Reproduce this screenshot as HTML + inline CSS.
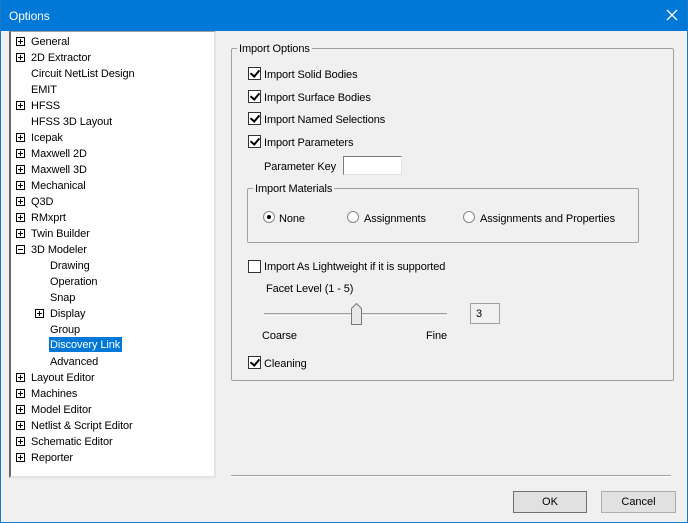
<!DOCTYPE html>
<html><head><style>
*{margin:0;padding:0;box-sizing:border-box}
body{width:688px;height:523px;background:#f0f0f0;font-family:"Liberation Sans",sans-serif;font-size:11px;color:#000;position:relative;overflow:hidden}
.abs{position:absolute;white-space:nowrap}
span.abs{padding-top:1px;letter-spacing:-0.1px}
#win{position:absolute;left:0;top:0;width:688px;height:523px;border:1px solid #1979ca;border-top:none}
#title{position:absolute;left:0;top:0;width:688px;height:31px;background:#0078d7;color:#fff;font-size:12px}
#tree{position:absolute;left:9px;top:31px;width:207px;height:447px;background:#fff;border-top:1px solid #a0a0a0;border-left:2px solid #696969;border-right:2px solid #e3e3e3;border-bottom:2px solid #e3e3e3}
.pl{position:absolute;width:9px;height:9px;border:1px solid #000;background:#fff}
.pl:before{content:"";position:absolute;left:1px;top:3px;width:5px;height:1px;background:#000}
.pl.p:after{content:"";position:absolute;left:3px;top:1px;width:1px;height:5px;background:#000}
.cb{position:absolute;width:13px;height:13px;border:1px solid #333;background:#fff}
.cb.c:after{content:"";position:absolute;left:3px;top:0px;width:4px;height:7px;border-right:2px solid #000;border-bottom:2px solid #000;transform:rotate(40deg)}
.rb{position:absolute;width:12px;height:12px;border-radius:50%;border:1px solid #888;background:#fff}
.rb.c:after{content:"";position:absolute;left:3px;top:3px;width:4px;height:4px;border-radius:50%;background:#000}
.grp{position:absolute;border:1px solid #a0a0a0;border-radius:2px}
.lg{position:absolute;background:#f0f0f0;padding:0 2px}
.btn{position:absolute;background:#e1e1e1;border:1px solid #adadad;text-align:center;line-height:20px}
</style></head><body>
<div id="title"><span class="abs" style="left:9px;top:8px">Options</span>
<svg class="abs" style="left:666px;top:9px" width="12" height="12"><path d="M1 1L11 11M11 1L1 11" stroke="#fff" stroke-width="1.3"/></svg></div>
<div id="win"></div>
<div id="tree">
<div class="pl p" style="left:5px;top:5px"></div><span class="abs" style="left:20px;top:3px">General</span>
<div class="pl p" style="left:5px;top:21px"></div><span class="abs" style="left:20px;top:19px">2D Extractor</span>
<span class="abs" style="left:20px;top:35px">Circuit NetList Design</span>
<span class="abs" style="left:20px;top:51px">EMIT</span>
<div class="pl p" style="left:5px;top:69px"></div><span class="abs" style="left:20px;top:67px">HFSS</span>
<span class="abs" style="left:20px;top:83px">HFSS 3D Layout</span>
<div class="pl p" style="left:5px;top:101px"></div><span class="abs" style="left:20px;top:99px">Icepak</span>
<div class="pl p" style="left:5px;top:117px"></div><span class="abs" style="left:20px;top:115px">Maxwell 2D</span>
<div class="pl p" style="left:5px;top:133px"></div><span class="abs" style="left:20px;top:131px">Maxwell 3D</span>
<div class="pl p" style="left:5px;top:149px"></div><span class="abs" style="left:20px;top:147px">Mechanical</span>
<div class="pl p" style="left:5px;top:165px"></div><span class="abs" style="left:20px;top:163px">Q3D</span>
<div class="pl p" style="left:5px;top:181px"></div><span class="abs" style="left:20px;top:179px">RMxprt</span>
<div class="pl p" style="left:5px;top:197px"></div><span class="abs" style="left:20px;top:195px">Twin Builder</span>
<div class="pl" style="left:5px;top:213px"></div><span class="abs" style="left:20px;top:211px">3D Modeler</span>
<span class="abs" style="left:39px;top:227px">Drawing</span>
<span class="abs" style="left:39px;top:243px">Operation</span>
<span class="abs" style="left:39px;top:259px">Snap</span>
<div class="pl p" style="left:24px;top:277px"></div><span class="abs" style="left:39px;top:275px">Display</span>
<span class="abs" style="left:39px;top:291px">Group</span>
<span class="abs" style="left:38px;top:305px;background:#0078d7;color:#fff;padding:2px 2px 1px 1px">Discovery Link</span>
<span class="abs" style="left:39px;top:323px">Advanced</span>
<div class="pl p" style="left:5px;top:341px"></div><span class="abs" style="left:20px;top:339px">Layout Editor</span>
<div class="pl p" style="left:5px;top:357px"></div><span class="abs" style="left:20px;top:355px">Machines</span>
<div class="pl p" style="left:5px;top:373px"></div><span class="abs" style="left:20px;top:371px">Model Editor</span>
<div class="pl p" style="left:5px;top:389px"></div><span class="abs" style="left:20px;top:387px">Netlist &amp; Script Editor</span>
<div class="pl p" style="left:5px;top:405px"></div><span class="abs" style="left:20px;top:403px">Schematic Editor</span>
<div class="pl p" style="left:5px;top:421px"></div><span class="abs" style="left:20px;top:419px">Reporter</span>
</div>

<div class="grp" style="left:231px;top:48px;width:443px;height:333px"></div>
<span class="lg abs" style="left:237px;top:42px">Import Options</span>
<div class="cb c" style="left:248px;top:67px"></div><span class="abs" style="left:264px;top:68px">Import Solid Bodies</span>
<div class="cb c" style="left:248px;top:90px"></div><span class="abs" style="left:264px;top:91px">Import Surface Bodies</span>
<div class="cb c" style="left:248px;top:112px"></div><span class="abs" style="left:264px;top:113px">Import Named Selections</span>
<div class="cb c" style="left:248px;top:135px"></div><span class="abs" style="left:264px;top:136px">Import Parameters</span>
<span class="abs" style="left:264px;top:160px">Parameter Key</span>
<div class="abs" style="left:343px;top:156px;width:59px;height:19px;background:#fff;border:1px solid #7a7a7a;border-right-color:#e3e3e3;border-bottom-color:#e3e3e3"></div>
<div class="grp" style="left:247px;top:188px;width:392px;height:55px"></div>
<span class="lg abs" style="left:253px;top:182px">Import Materials</span>
<div class="rb c" style="left:263px;top:211px"></div><span class="abs" style="left:279px;top:212px">None</span>
<div class="rb" style="left:347px;top:211px"></div><span class="abs" style="left:364px;top:212px">Assignments</span>
<div class="rb" style="left:463px;top:211px"></div><span class="abs" style="left:480px;top:212px">Assignments and Properties</span>
<div class="cb" style="left:248px;top:260px"></div><span class="abs" style="left:264px;top:260px">Import As Lightweight if it is supported</span>
<span class="abs" style="left:266px;top:282px">Facet Level (1 - 5)</span>
<div class="abs" style="left:264px;top:313px;width:183px;height:3px;border-top:1px solid #a0a0a0;border-bottom:1px solid #fff;background:#e3e3e3"></div>
<svg class="abs" style="left:351px;top:303px" width="11" height="22"><path d="M0.5 21.5V5.5L5.5 0.5L10.5 5.5V21.5Z" fill="#e8e8e8" stroke="#777"/></svg>
<div class="abs" style="left:470px;top:303px;width:30px;height:21px;border:1px solid #a0a0a0;padding:4px 5px">3</div>
<span class="abs" style="left:262px;top:329px">Coarse</span>
<span class="abs" style="left:426px;top:329px">Fine</span>
<div class="cb c" style="left:248px;top:356px"></div><span class="abs" style="left:264px;top:357px">Cleaning</span>
<div class="abs" style="left:231px;top:475px;width:440px;height:2px;border-top:1px solid #a0a0a0;border-bottom:1px solid #fff"></div>
<div class="btn" style="left:513px;top:491px;width:74px;height:22px;border-color:#707070;line-height:21px">OK</div>
<div class="btn" style="left:601px;top:491px;width:75px;height:22px;line-height:21px">Cancel</div>
</body></html>
